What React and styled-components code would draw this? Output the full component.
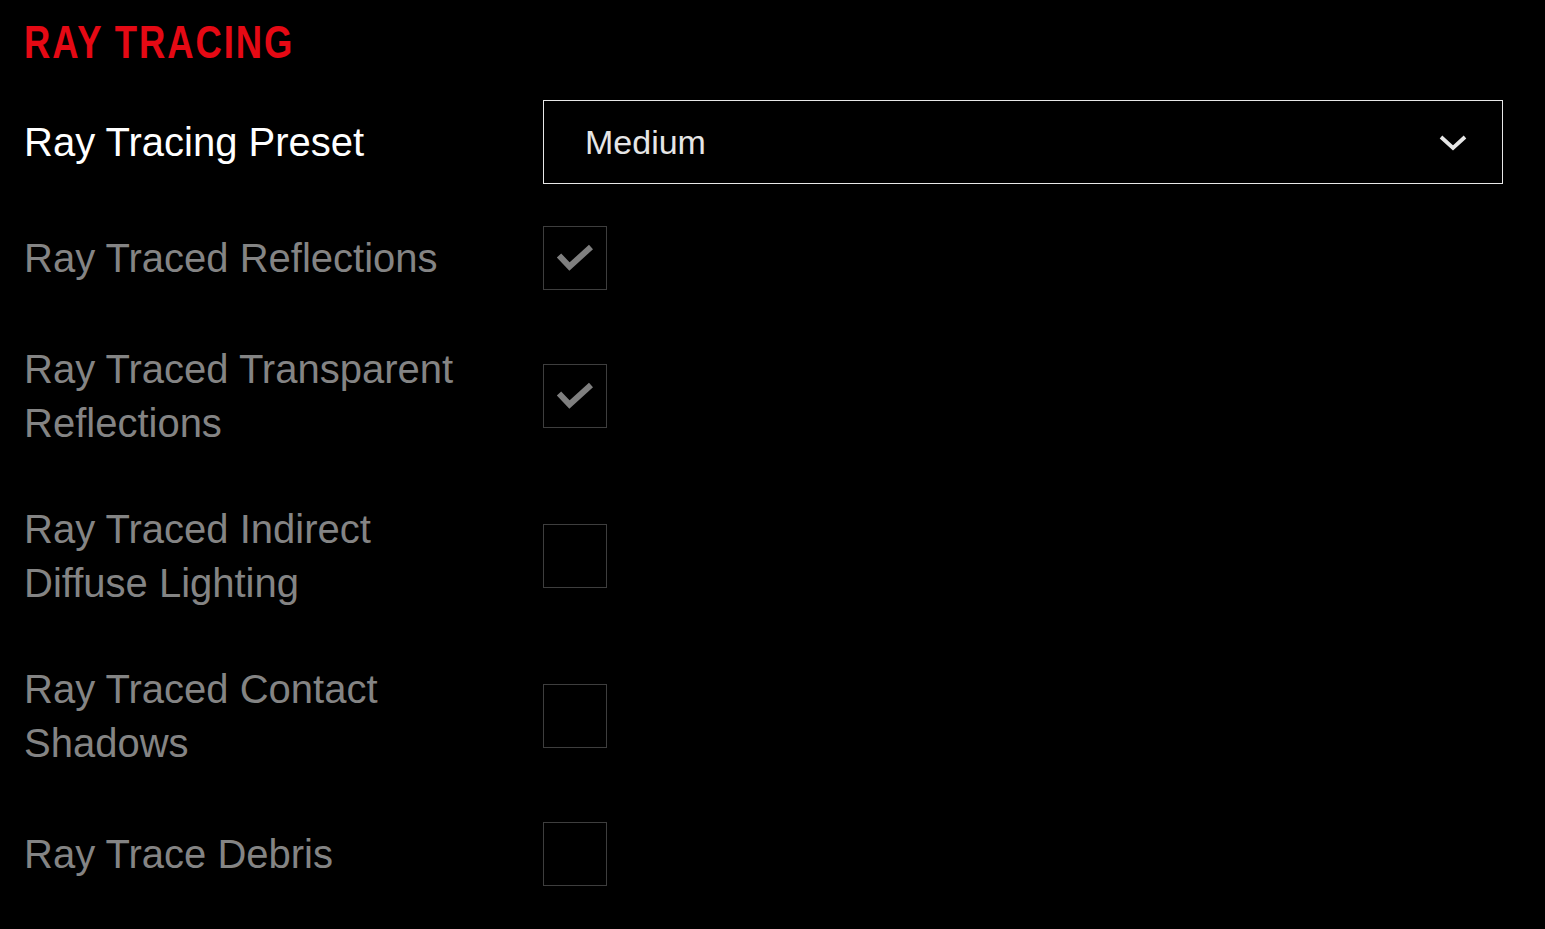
import React, { useState } from "react";
import styled, { createGlobalStyle } from "styled-components";

const Global = createGlobalStyle`
  html, body { margin: 0; padding: 0; background: #000; }
  body { font-family: "Liberation Sans", Arial, sans-serif; }
`;

const Page = styled.div`
  width: 1545px;
  min-height: 929px;
  box-sizing: border-box;
  padding: 16px 42px 0 24px;
  background: #000;
`;

const Title = styled.h1`
  margin: 0 0 32px;
  font-family: "Liberation Sans", Arial, sans-serif;
  font-weight: 700;
  font-size: 47px;
  line-height: 52px;
  letter-spacing: 2.5px;
  color: #e50914;
  transform: scaleX(0.775);
  transform-origin: left center;
  white-space: nowrap;
`;

const List = styled.div`
  display: flex;
  flex-direction: column;
  gap: 52px;
`;

const Row = styled.div`
  display: grid;
  grid-template-columns: 519px 1fr;
  align-items: center;
  margin-bottom: ${(p) => p.$extra || 0}px;
`;

const Label = styled.div`
  font-size: 40px;
  line-height: 54px;
  color: ${(p) => (p.$active ? "#ffffff" : "#848484")};
  padding-right: 40px;
`;

const Select = styled.div`
  height: 84px;
  box-sizing: border-box;
  border: 1.5px solid #e8e8e8;
  display: flex;
  align-items: center;
  justify-content: space-between;
  padding: 0 34px 0 41px;
  font-size: 34px;
  color: #e6e6e6;
  cursor: pointer;
`;

const Box = styled.div`
  width: 64px;
  height: 64px;
  box-sizing: border-box;
  border: 1.5px solid #3e3e3e;
  display: flex;
  align-items: center;
  justify-content: center;
  cursor: pointer;
`;

const Chevron = () => (
  <svg width="30" height="20" viewBox="0 0 30 20">
    <path d="M3 5 L15 16 L27 5" fill="none" stroke="#e6e6e6" strokeWidth="3.8" />
  </svg>
);

const Check = () => (
  <svg width="38" height="30" viewBox="0 0 38 30">
    <path d="M3 12.5 L13.5 23.5 L35 4" fill="none" stroke="#7f7f7f" strokeWidth="6" />
  </svg>
);

const items = [
  { label: ["Ray Traced Reflections"], on: true },
  { label: ["Ray Traced Transparent", "Reflections"], on: true },
  { label: ["Ray Traced Indirect", "Diffuse Lighting"], on: false },
  { label: ["Ray Traced Contact", "Shadows"], on: false },
  { label: ["Ray Trace Debris"], on: false },
];

export default function App() {
  const [state, setState] = useState(items.map((i) => i.on));
  return (
    <Page>
      <Global />
      <Title>RAY TRACING</Title>
      <Row $extra={42}>
        <Label $active>Ray Tracing Preset</Label>
        <Select>
          <span>Medium</span>
          <Chevron />
        </Select>
      </Row>
      <List>
        {items.map((it, i) => (
          <Row key={i}>
            <Label>
              {it.label.map((l, j) => (
                <div key={j}>{l}</div>
              ))}
            </Label>
            <Box onClick={() => setState((s) => s.map((v, k) => (k === i ? !v : v)))}>
              {state[i] && <Check />}
            </Box>
          </Row>
        ))}
      </List>
    </Page>
  );
}
